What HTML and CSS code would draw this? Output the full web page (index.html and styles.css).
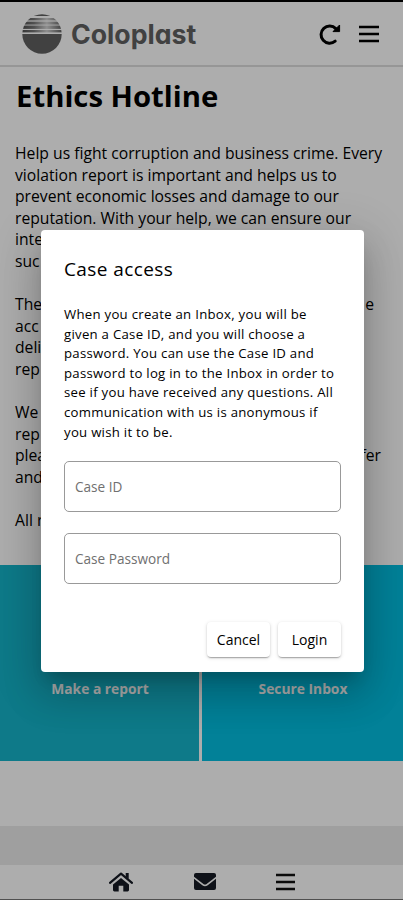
FILE: index.html
```html
<!DOCTYPE html>
<html lang="en">
<head>
    <meta charset="UTF-8">
    <meta name="viewport" content="width=device-width, initial-scale=1.0">
    <title>Ethics Hotline</title>
    <link rel="stylesheet" href="styles.css">
</head>
<body>
    <header class="header">
        <div class="logo">
            <svg width="40" height="40" viewBox="0 0 40 40">
                <defs>
                    <linearGradient id="shine" x1="0" x2="1" y1="0" y2="0">
                        <stop offset="0" stop-color="#505050"/>
                        <stop offset="0.3" stop-color="#777"/>
                        <stop offset="0.62" stop-color="#d2d2d2"/>
                        <stop offset="1" stop-color="#606060"/>
                    </linearGradient>
                    <clipPath id="ball"><circle cx="20" cy="20" r="19.7"/></clipPath>
                </defs>
                <g clip-path="url(#ball)">
                    <rect y="20" width="40" height="20" fill="#606060"/>
                    <rect width="40" height="2" fill="#606060"/>
                    <rect y="4" width="40" height="2.4" fill="url(#shine)"/>
                    <rect y="7.6" width="40" height="3" fill="url(#shine)"/>
                    <rect y="11.5" width="40" height="3.4" fill="url(#shine)"/>
                    <rect y="16" width="40" height="2.4" fill="url(#shine)"/>
                </g>
            </svg>
            <span class="logo-text">Coloplast</span>
        </div>
        <div class="header-icons">
            <svg width="22" height="22" viewBox="0 0 22 22" fill="none">
                <path d="M16.2 18.2A8.600 8.600 0 1 1 16.800 5.600" stroke="#000" stroke-width="3" stroke-linecap="round"/>
                <path d="M20.600 2v6.600h-6.600z" fill="#000" stroke="#000" stroke-linejoin="round"/>
            </svg>
            <svg width="20" height="18" viewBox="0 0 20 18">
                <path d="M0 2h20M0 9h20M0 16h20" stroke="#000" stroke-width="2.6"/>
            </svg>
        </div>
    </header>

    <main class="content">
        <h1>Ethics Hotline</h1>
        <p>
            Help us fight corruption and business crime. Every<br>
            violation report is important and helps us to<br>
            prevent economic losses and damage to our<br>
            reputation. With your help, we can ensure our<br>
            inte<br>
            suc
        </p>
        <p>
            <span class="line first"><span>The</span><span>e</span></span>
            acc<br>
            deli<br>
            rep
        </p>
        <p>
            We<br>
            rep<br>
            <span class="line"><span>plea</span><span>fer</span></span>
            and
        </p>
        <p>All r</p>
    </main>

    <section class="tiles">
        <a class="tile tile-report">Make a report</a>
        <a class="tile tile-inbox">Secure Inbox</a>
    </section>

    <div class="footer"></div>

    <nav class="bottom-nav">
        <svg class="home" width="24" height="20" viewBox="0 0 24 20">
            <path d="M1 10.8L12 1.6l11 9.2" fill="none" stroke="#151a24" stroke-width="2.2" stroke-linecap="round" stroke-linejoin="round"/>
            <path d="M16.7 1h3v6l-3-2.5z" fill="#151a24"/>
            <path d="M4 12.600l8-6.700 8 6.700V18q0 1.400-1.400 1.400h-4.300v-5.600H9.700v5.600H5.400Q4 19.400 4 18z" fill="#151a24"/>
        </svg>
        <svg class="mail" width="22" height="17" viewBox="0 0 22 17">
            <path d="M2 0h18q2 0 2 2v1.700L12.600 11q-1.600 1.200-3.200 0L0 3.700V2Q0 0 2 0z" fill="#151a24"/>
            <path d="M0 5.800l8.300 6.400q2.700 1.900 5.400 0L22 5.800V15q0 2-2 2H2q-2 0-2-2z" fill="#151a24"/>
        </svg>
        <svg class="menu" width="20" height="18" viewBox="0 0 20 18">
            <path d="M0 2h19M0 9h19M0 16h19" stroke="#111" stroke-width="2.6"/>
        </svg>
    </nav>

    <div class="overlay">
        <form class="dialog">
            <h2>Case access</h2>
            <p class="dialog-text">
                When you create an Inbox, you will be<br>
                given a Case ID, and you will choose a<br>
                password. You can use the Case ID and<br>
                password to log in to the Inbox in order to<br>
                see if you have received any questions. All<br>
                communication with us is anonymous if<br>
                you wish it to be.
            </p>
            <input class="field" type="text" placeholder="Case ID">
            <input class="field" type="password" placeholder="Case Password">
            <div class="actions">
                <button type="button" class="btn">Cancel</button>
                <button type="submit" class="btn">Login</button>
            </div>
        </form>
    </div>
</body>
</html>
```
FILE: styles.css
```css
* {
    margin: 0;
    padding: 0;
    box-sizing: border-box;
}

body {
    font-family: "Open Sans", "Noto Sans", sans-serif;
    background: white;
    color: #000;
    height: 900px;
    border-top: 2px solid #000;
    border-bottom: 1px solid #777;
    display: flex;
    flex-direction: column;
    overflow: hidden;
}

.header {
    height: 65px;
    flex-shrink: 0;
    padding: 0 24px 0 22px;
    border-bottom: 2px solid #dedede;
    display: flex;
    align-items: center;
    justify-content: space-between;
}

.logo {
    display: flex;
    align-items: center;
    gap: 9px;
}

.logo-text {
    font-family: Inter, sans-serif;
    font-feature-settings: "cv11";
    font-size: 26.7px;
    font-weight: 700;
    color: #606060;
}

.header-icons {
    display: flex;
    align-items: center;
    gap: 18px;
}

.content {
    height: 498px;
    flex-shrink: 0;
    padding: 9px 16px 0 15px;
}

h1 {
    font-size: 29.3px;
    line-height: 40px;
    font-weight: 700;
    margin: 0 0 27px 1px;
}

.content p {
    font-size: 15.7px;
    line-height: 21.6px;
    margin-bottom: 21.6px;
    white-space: nowrap;
}

.line {
    display: flex;
    justify-content: space-between;
    width: 366px;
}

.line.first {
    width: 359px;
}

.tiles {
    height: 196px;
    flex-shrink: 0;
    display: grid;
    grid-template-columns: 199px 1fr;
    gap: 3px;
}

.tile {
    color: white;
    font-size: 13.8px;
    line-height: 20px;
    font-weight: 700;
    text-align: center;
    padding: 114px 0 0 1px;
}

.tile-report {
    background: #15b4cb;
}

.tile-inbox {
    background: #03bfe1;
}

.footer {
    height: 39px;
    flex-shrink: 0;
    margin-top: 65px;
    background: #ebebeb;
}

.bottom-nav {
    flex: 1;
    display: flex;
    align-items: center;
    padding: 0 0 1px 109px;
}

.mail {
    margin-left: 61px;
}

.menu {
    margin-left: 60px;
}

.overlay {
    position: absolute;
    inset: 0;
    background: rgba(0, 0, 0, 0.32);
    display: flex;
    align-items: center;
    justify-content: center;
    padding: 2px 0 0 2px;
}

.dialog {
    width: 323px;
    height: 442px;
    padding: 24px 23px 14px;
    background: white;
    border-radius: 4px;
    box-shadow: 0 11px 15px -7px rgba(0, 0, 0, 0.2),
        0 24px 38px 3px rgba(0, 0, 0, 0.14),
        0 9px 46px 8px rgba(0, 0, 0, 0.12);
}

h2 {
    font-size: 19px;
    line-height: 30px;
    font-weight: 500;
    letter-spacing: 0.4px;
    margin-bottom: 21px;
}

.dialog-text {
    font-size: 13.2px;
    line-height: 19.6px;
    letter-spacing: 0.27px;
    white-space: nowrap;
    margin-bottom: 19px;
}

.field {
    display: block;
    width: 277px;
    height: 51px;
    padding: 0 10px;
    font: inherit;
    font-size: 13.6px;
    border: 1px solid #999;
    border-radius: 5px;
    margin-bottom: 21px;
    outline: none;
}

.field::placeholder {
    color: #707070;
}

.actions {
    display: flex;
    justify-content: flex-end;
    gap: 8px;
    padding-top: 17px;
}

.btn {
    width: 63px;
    height: 35px;
    font: inherit;
    font-size: 14px;
    font-weight: 500;
    color: #000;
    background: white;
    border: none;
    border-radius: 4px;
    box-shadow: 0 2px 1px -1px rgba(0, 0, 0, 0.2),
        0 1px 2px rgba(0, 0, 0, 0.14),
        0 1px 4px rgba(0, 0, 0, 0.12);
}
```
